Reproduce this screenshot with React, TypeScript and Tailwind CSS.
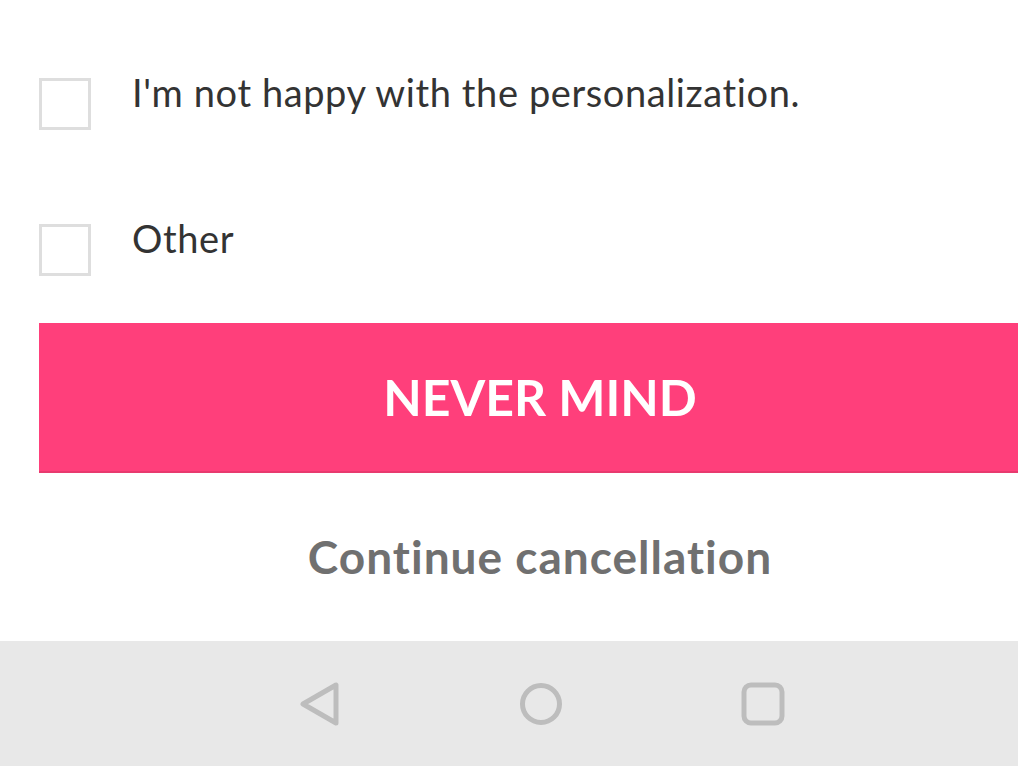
import React from "react";

function Option({ label }: { label: string }) {
  return (
    <div className="flex h-[52px] items-center gap-[41px]">
      <div className="h-[52px] w-[52px] shrink-0 border-[3px] border-[#dedede] bg-white" />
      <span className="-mt-[24px] text-[38px] leading-none tracking-[0.6px] text-[#333333]">
        {label}
      </span>
    </div>
  );
}

export default function App() {
  return (
    <div
      className="flex h-[766px] w-[1018px] flex-col overflow-hidden bg-white"
      style={{ fontFamily: "Lato, 'Open Sans', sans-serif" }}
    >
      <div className="flex flex-1 flex-col pl-[39px] pt-[78px]">
        <div className="flex flex-col gap-[94px]">
          <Option label="I'm not happy with the personalization." />
          <Option label="Other" />
        </div>

        {/* button runs past the right edge of the screen */}
        <button className="mt-[47px] flex h-[150px] w-[1002px] shrink-0 items-center justify-center border-b-2 border-[#e83a6f] bg-[#ff3f7b]">
          <span className="text-[50px] font-bold leading-none tracking-[0px] text-white">
            NEVER MIND
          </span>
        </button>

        <div className="flex w-[1002px] flex-1 items-center justify-center">
          <span className="text-[46px] font-bold leading-none tracking-[1px] text-[#707070]">
            Continue cancellation
          </span>
        </div>
      </div>

      <nav className="flex h-[125px] items-center justify-center gap-[178px] bg-[#e8e8e8] pl-[66px]">
        <svg width="42" height="44" viewBox="0 0 42 44" fill="none">
          <path
            d="M37 3 L37 41 L4 22 Z"
            stroke="#bdbdbd"
            strokeWidth="5"
            strokeLinejoin="round"
          />
        </svg>
        <svg width="44" height="44" viewBox="0 0 44 44" fill="none">
          <ellipse cx="22" cy="22" rx="18.5" ry="18.5" stroke="#bdbdbd" strokeWidth="5" />
        </svg>
        <svg width="44" height="44" viewBox="0 0 44 44" fill="none">
          <rect x="3" y="3" width="38" height="38" rx="7" stroke="#bdbdbd" strokeWidth="5" />
        </svg>
      </nav>
    </div>
  );
}
